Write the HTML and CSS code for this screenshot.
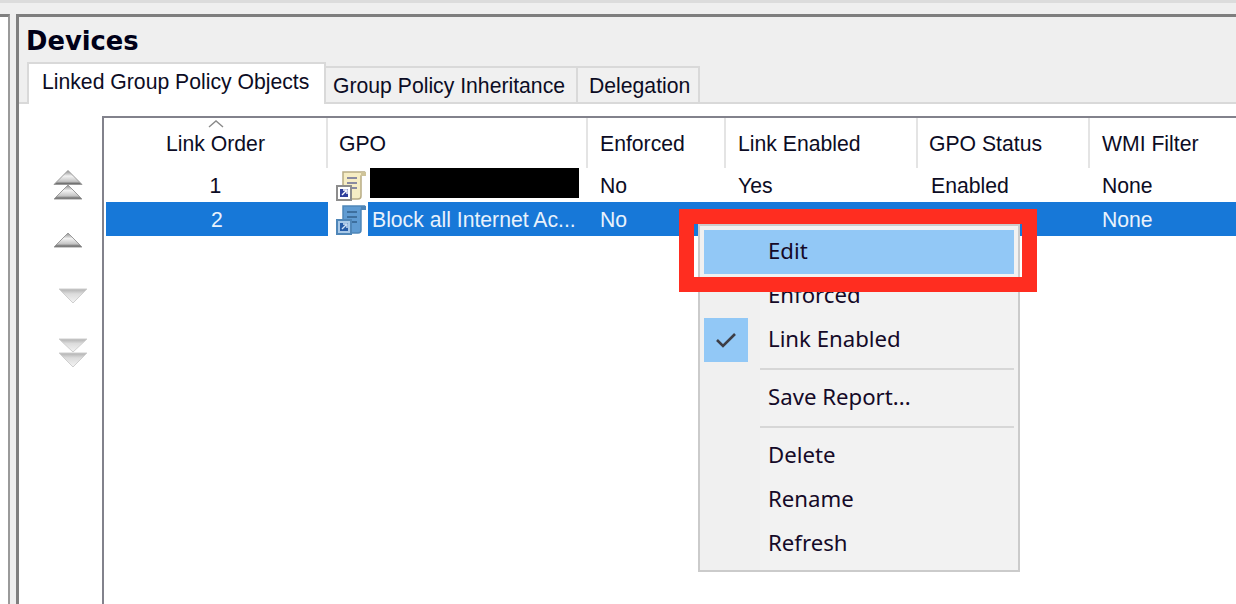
FILE: index.html
```html
<!DOCTYPE html>
<html lang="en">
<head>
<meta charset="utf-8">
<title>Devices</title>
<link rel="stylesheet" href="styles.css">
</head>
<body>
<div class="topstrip"></div>
<div class="workspace">
  <div class="treepane"></div>
  <section class="panel">
    <h1 class="title">Devices</h1>
    <div class="tabs">
      <div class="tab active">Linked Group Policy Objects</div>
      <div class="tab">Group Policy Inheritance</div>
      <div class="tab">Delegation</div>
    </div>
    <div class="tabbody">
      <div class="arrows">
        <svg class="arrow a-first" width="30" height="30" viewBox="0 0 30 30"><defs><linearGradient id="u" x1="0" y1="0" x2="0" y2="1"><stop offset="0" stop-color="#8a8a8a"/><stop offset=".4" stop-color="#f2f2f2"/><stop offset=".78" stop-color="#c4c4c4"/><stop offset="1" stop-color="#4c4c4c"/></linearGradient><linearGradient id="d" x1="0" y1="0" x2="0" y2="1"><stop offset="0" stop-color="#b0b0b0"/><stop offset=".35" stop-color="#dcdcdc"/><stop offset="1" stop-color="#f4f4f4"/></linearGradient></defs><path d="M15 .5 29 14.500H1Z" fill="url(#u)" stroke="#9a9a9a"/><path d="M15 15 29 29H1Z" fill="url(#u)" stroke="#9a9a9a"/></svg>
        <svg class="arrow a-up" width="30" height="16" viewBox="0 0 30 16"><path d="M15 1 29 15H1Z" fill="url(#u)" stroke="#9a9a9a"/></svg>
        <svg class="arrow a-down" width="30" height="16" viewBox="0 0 30 16"><path d="M1 1H29L15 15Z" fill="url(#d)" stroke="#cfcfcf"/></svg>
        <svg class="arrow a-last" width="30" height="30" viewBox="0 0 30 30"><path d="M1 1H29L15 14Z" fill="url(#d)" stroke="#cfcfcf"/><path d="M1 15H29L15 29Z" fill="url(#d)" stroke="#cfcfcf"/></svg>
      </div>
      <div class="list">
        <div class="row header">
          <div class="cell c-order sorted">Link Order<svg class="caret" width="16" height="8" viewBox="0 0 16 8"><path d="M1 7 8 1l7 6" fill="none" stroke="#8a8a8a" stroke-width="1.4"/></svg></div>
          <div class="cell c-gpo">GPO</div>
          <div class="cell c-enf">Enforced</div>
          <div class="cell c-link">Link Enabled</div>
          <div class="cell c-status">GPO Status</div>
          <div class="cell c-wmi">WMI Filter</div>
        </div>
        <div class="row item">
          <div class="cell c-order">1</div>
          <div class="cell c-gpo">
            <svg class="gpoicon" width="32" height="32" viewBox="0 0 32 32"><path d="M7 3H28L25 7V27Q25 30 22 30H7Z" fill="#f6edc4" stroke="#b8ac84" stroke-width="1.5"/><path d="M11 9H21M11 14H21M11 19H21" stroke="#8a8aa0" stroke-width="2"/><path d="M25 3h5v4h-5z" fill="#cfc49a"/><rect x="1" y="17" width="14" height="14" fill="#fff" stroke="#8d8d8d" stroke-width="2"/><path d="M4 20h8v8H4z" fill="#2f3f9c"/><path d="M6 26l4-4M7 21h4v4" stroke="#fff" stroke-width="1.4" fill="none"/></svg>
            <span class="redact"></span>
          </div>
          <div class="cell c-enf">No</div>
          <div class="cell c-link">Yes</div>
          <div class="cell c-status">Enabled</div>
          <div class="cell c-wmi">None</div>
        </div>
        <div class="row item selected">
          <div class="cell c-order">2</div>
          <div class="cell c-gpo">
            <svg class="gpoicon" width="32" height="32" viewBox="0 0 32 32"><path d="M7 3H28L25 7V27Q25 30 22 30H7Z" fill="#5f9bd2" stroke="#4f86b8" stroke-width="1.5"/><path d="M11 9H21M11 14H21M11 19H21" stroke="#3d6f9e" stroke-width="2"/><path d="M25 3h5v4h-5z" fill="#4f86b8"/><rect x="1" y="17" width="14" height="14" fill="#a9c9e8" stroke="#4f86b8" stroke-width="2"/><path d="M4 20h8v8H4z" fill="#265ca8"/><path d="M6 26l4-4M7 21h4v4" stroke="#cfe2f5" stroke-width="1.4" fill="none"/></svg>
            <span class="gponame">Block all Internet Ac...</span>
          </div>
          <div class="cell c-enf">No</div>
          <div class="cell c-link"></div>
          <div class="cell c-status"></div>
          <div class="cell c-wmi">None</div>
        </div>
      </div>
    </div>
  </section>
</div>

<div class="menu">
  <div class="mi hot">Edit</div>
  <div class="mi">Enforced</div>
  <div class="mi"><span class="check"><svg width="20" height="16" viewBox="0 0 20 16"><path d="M1 8l6 6L19 2" fill="none" stroke="#3d3d45" stroke-width="2.6"/></svg></span>Link Enabled</div>
  <div class="sep"></div>
  <div class="mi">Save Report...</div>
  <div class="sep"></div>
  <div class="mi">Delete</div>
  <div class="mi">Rename</div>
  <div class="mi">Refresh</div>
</div>
<div class="callout"></div>
</body>
</html>
```
FILE: styles.css
```css
* { box-sizing: border-box; }
html, body { height: 100%; }
body {
  margin: 0;
  height: 604px;
  overflow: hidden;
  background: #efefef;
  color: #0c0c24;
  font-family: "Liberation Sans", Arial, sans-serif;
  font-size: 21.2px;
  position: relative;
  display: flex;
  flex-direction: column;
}
.topstrip { height: 3px; background: #dcdcdc; flex: none; }
.workspace { flex: 1; display: flex; padding-top: 11px; min-height: 0; }
.treepane {
  width: 10px; flex: none; margin-right: 6px;
  background: #fff;
  border-top: 3px solid #808080;
  border-right: 2px solid #9a9a9a;
}
.panel {
  flex: 1; min-width: 0;
  display: flex; flex-direction: column;
  border-top: 3px solid #7e7e7e;
  border-left: 3px solid #808080;
}
.title {
  margin: 0; height: 45px; padding: 8px 0 0 7px;
  font-family: "DejaVu Sans", sans-serif;
  font-size: 25.8px; line-height: 32px; font-weight: 700;
  color: #000018;
}
.tabs {
  display: flex; align-items: flex-end; height: 42px; flex: none;
  padding-left: 8px;
  border-bottom: 2px solid #d9d9d9;
  position: relative;
}
.tab {
  height: 36px;
  padding: 0 7px; line-height: 36px;
  background: #f0f0f0;
  border: 2px solid #d9d9d9; border-bottom: 0; border-left: 0;
  white-space: nowrap;
}
.tab.active {
  height: 42px; margin-bottom: -2px; width: 299px;
  padding: 0 0 0 13px; line-height: 36px;
  background: #fff;
  border-left: 2px solid #d9d9d9;
}
.tab:nth-child(2) { width: 252px; }
.tab:nth-child(3) { width: 122px; padding-left: 11px; }
.tabbody { flex: 1; background: #fff; display: flex; min-height: 0; padding-top: 12px; }
.arrows {
  width: 83px; flex: none; padding: 54px 0 0 34px;
  display: flex; flex-direction: column; align-items: flex-start;
}
.arrow { display: block; flex: none; }
.a-first { margin-bottom: 32px; }
.a-up { margin-bottom: 40px; }
.a-down { margin: 0 0 34px 5px; }
.a-last { margin-left: 5px; }
.list {
  flex: 1; min-width: 0;
  border-top: 2px solid #82828c;
  border-left: 2px solid #82828c;
}
.row { display: flex; }
.header { height: 50px; padding-left: 1px; }
.header .cell { border-right: 2px solid #e4e4e4; line-height: 52px; }
.header .c-gpo { padding-left: 11px; }
.header .c-enf, .header .c-link, .header .c-wmi { padding-left: 12px; }
.header .c-status { padding-left: 11px; }
.item { height: 34px; line-height: 36px; }
.cell { flex: none; white-space: nowrap; position: relative; padding-left: 13px; }
.c-order { width: 223px; padding-left: 0; text-align: center; }
.c-gpo { width: 260px; padding-left: 12px; }
.c-enf { width: 138px; }
.c-link { width: 192px; }
.c-status { width: 172px; padding-left: 12px; }
.c-wmi { flex: 1; border-right: 0 !important; }
.item .c-gpo { padding-left: 9px; display: flex; align-items: center; }
.item .c-status { padding-left: 14px; }
.caret { position: absolute; left: 103px; top: 2px; }
.gpoicon { flex: none; }
.redact { width: 209px; height: 30px; margin: -4px 0 0 2px; background: #000; }
.selected { color: #e8f2fc; background: #1778d8; margin-left: 2px; }
.selected .c-order { width: 222px; }
.selected .c-gpo { width: 259px; background: #fff; padding-left: 8px; }
.gponame { flex: 1; background: #1778d8; height: 34px; padding-left: 4px; overflow: hidden; }
.menu {
  position: absolute; left: 698px; top: 224px; width: 322px; height: 348px;
  border: 2px solid #cbcbcb;
  padding: 4px;
  background: linear-gradient(to right, #f0f0f0 60px, #f2f2f2 60px);
  font-family: "Noto Sans", "Open Sans", sans-serif;
  font-size: 22.2px;
}
.mi { height: 44px; line-height: 42px; padding-left: 64px; position: relative; color: #150a28; }
.hot { background: #92c8f6; }
.check {
  position: absolute; left: 0; top: 0; width: 44px; height: 44px;
  background: #92c8f6; display: flex; align-items: center; justify-content: center;
}
.sep { height: 2px; margin: 6px 0 6px 56px; background: #d7d7d7; }
.callout {
  position: absolute; left: 679px; top: 209px; width: 358px; height: 83px;
  border: 15px solid #ff2d20;
}
```
